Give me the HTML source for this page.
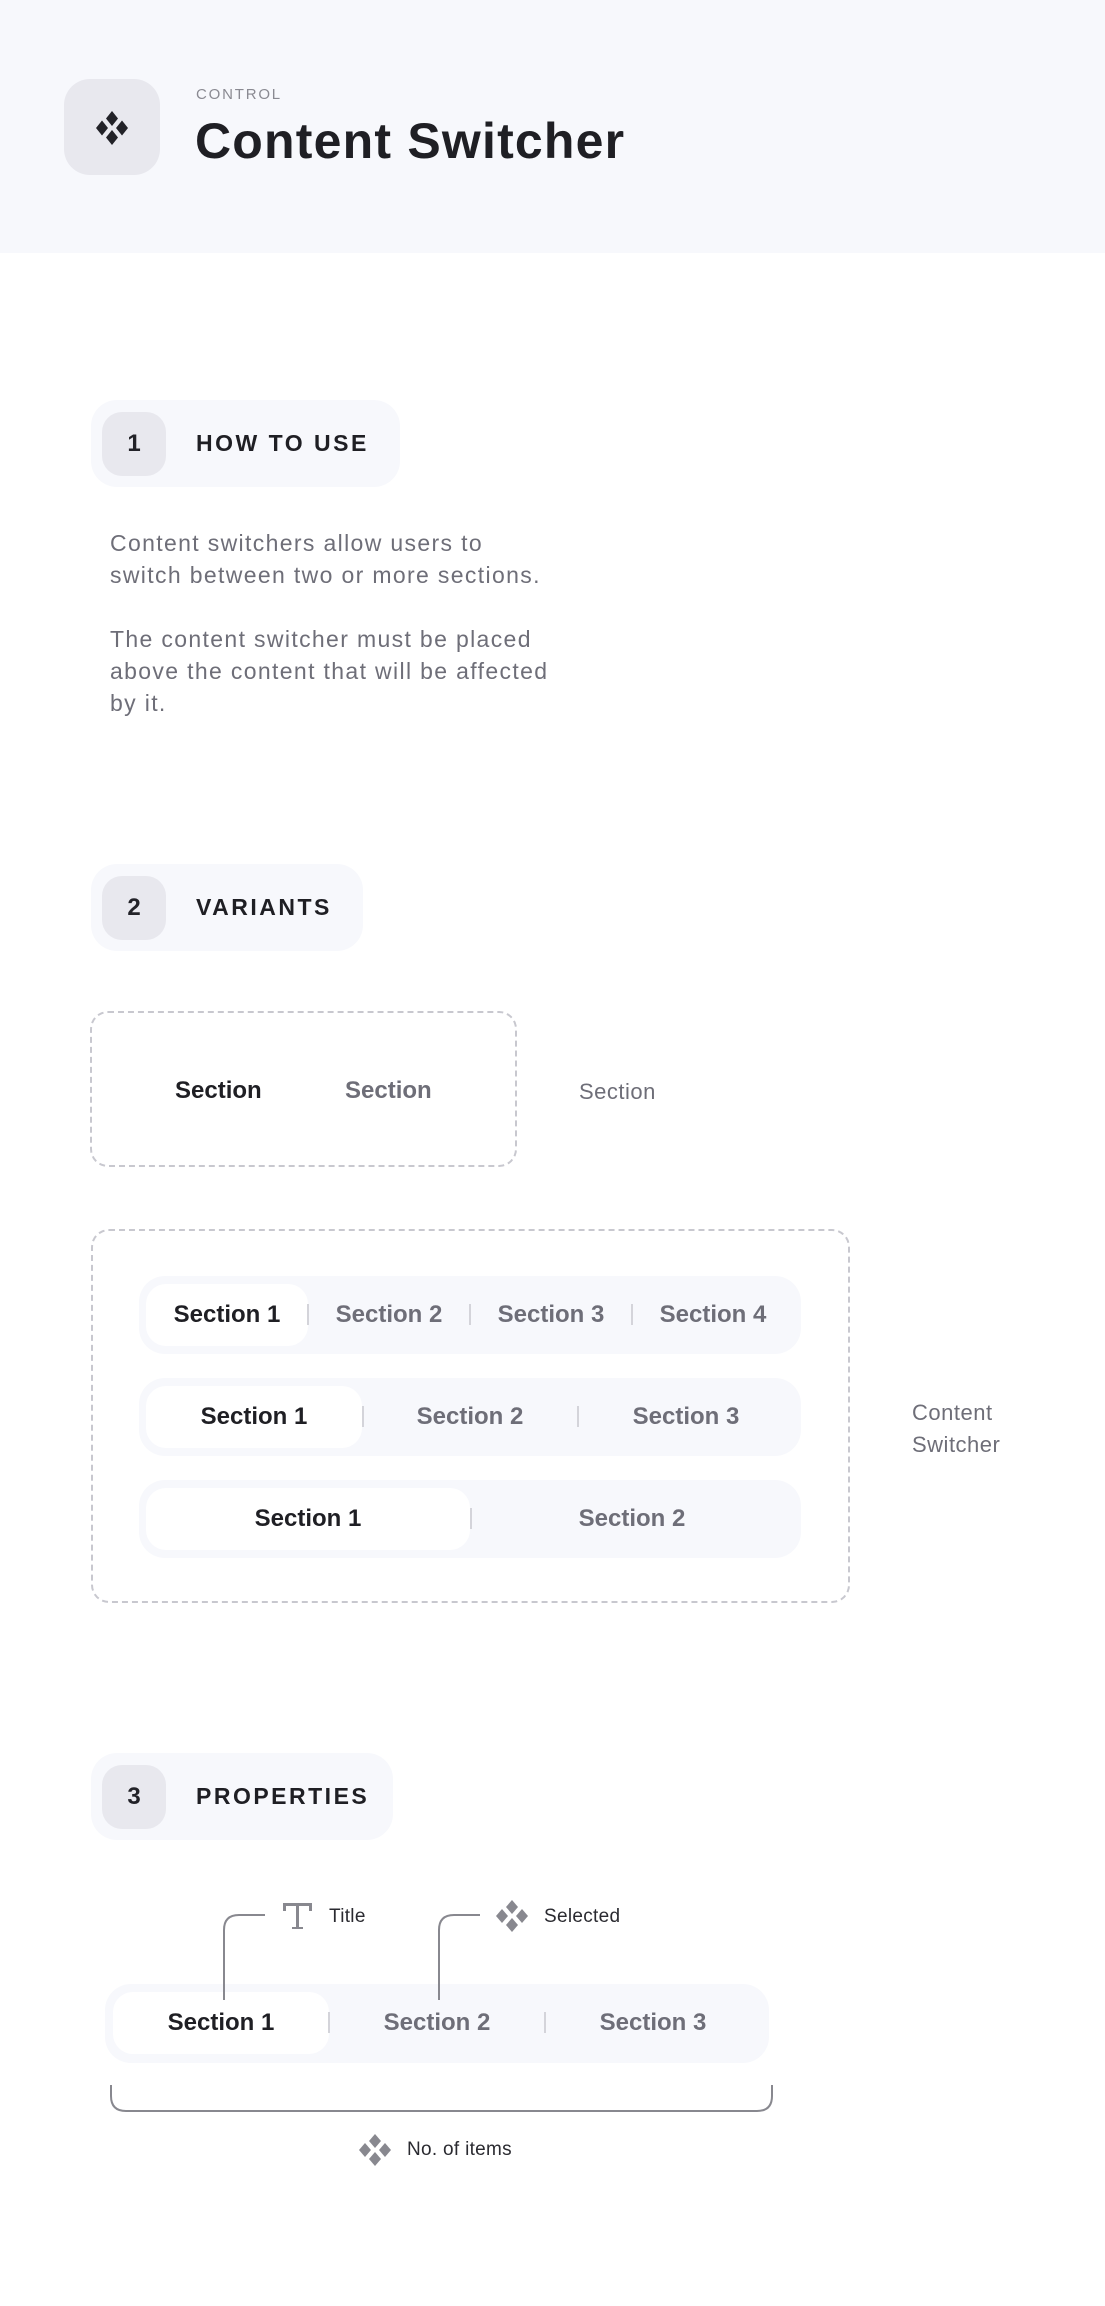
<!DOCTYPE html>
<html><head><meta charset="utf-8"><style>
*{margin:0;padding:0;box-sizing:border-box}
body{width:1105px;height:2306px;background:#fff;position:relative;font-family:"Liberation Sans",Arial,sans-serif;overflow:hidden}
.a{position:absolute}
.hdr{left:0;top:0;width:1105px;height:253px;background:#f7f8fc}
.pill{background:#f7f8fc;border-radius:26px;height:87px}
.num{position:absolute;left:11px;top:12px;width:64px;height:64px;border-radius:20px;background:#e8e8ee;font-size:24px;font-weight:bold;color:#222228;display:flex;align-items:center;justify-content:center}
.pt{position:absolute;left:105px;top:0;line-height:87px;font-size:23px;font-weight:bold;letter-spacing:2.5px;color:#1f1f24}
.p{left:110px;font-size:23px;letter-spacing:1.35px;line-height:32px;color:#6e6e78}
.dash{border:2px dashed #c8c8cf;border-radius:18px}
.sw{background:#f7f8fc;border-radius:26px;height:78px}
.it{position:absolute;top:8px;height:62px;display:flex;align-items:center;justify-content:center;font-size:24px;font-weight:bold;color:#6e6e78}
.sel{background:#fff;border-radius:20px;color:#1f1f24}
.dv{position:absolute;top:28px;width:2px;height:21px;background:#d4d4da}
.lbl{font-size:22px;color:#6e6e78;line-height:32px;letter-spacing:0.5px}
</style></head><body>
<div class="a hdr"></div>
<div class="a" style="left:64px;top:79px;width:96px;height:96px;border-radius:26px;background:#e8e8ee"></div>
<svg class="a" style="left:94px;top:110px" width="36" height="36" viewBox="0 0 36 36"><g fill="#222228"><path d="M18 1l6 7.5-6 7.5-6-7.5z"/><path d="M8 10.5l6 7.5-6 7.5-6-7.5z"/><path d="M28 10.5l6 7.5-6 7.5-6-7.5z"/><path d="M18 20l6 7.5-6 7.5-6-7.5z"/></g></svg>
<div class="a" style="left:196px;top:86px;font-size:15px;letter-spacing:1.8px;color:#8a8a92">CONTROL</div>
<div class="a" style="left:195px;top:112px;font-size:50px;font-weight:bold;color:#1f1f24;letter-spacing:1.2px">Content Switcher</div>

<div class="a pill" style="left:91px;top:400px;width:309px"><div class="num">1</div><div class="pt">HOW TO USE</div></div>
<div class="a p" style="top:527px">Content switchers allow users to<br>switch between two or more sections.<br><br>The content switcher must be placed<br>above the content that will be affected<br>by it.</div>

<div class="a pill" style="left:91px;top:864px;width:272px"><div class="num">2</div><div class="pt">VARIANTS</div></div>
<div class="a dash" style="left:90px;top:1011px;width:427px;height:156px"></div>
<div class="a" style="left:175px;top:1077px;font-size:24px;font-weight:bold;color:#1f1f24">Section</div>
<div class="a" style="left:345px;top:1077px;font-size:24px;font-weight:bold;color:#6e6e78">Section</div>
<div class="a lbl" style="left:579px;top:1076px">Section</div>

<div class="a dash" style="left:91px;top:1229px;width:759px;height:374px"></div>
<div class="a sw" style="left:139px;top:1276px;width:662px">
<div class="it sel" style="left:7px;width:162px">Section 1</div><div class="dv" style="left:168px"></div>
<div class="it" style="left:169px;width:162px">Section 2</div><div class="dv" style="left:330px"></div>
<div class="it" style="left:331px;width:162px">Section 3</div><div class="dv" style="left:492px"></div>
<div class="it" style="left:493px;width:162px">Section 4</div></div>
<div class="a sw" style="left:139px;top:1378px;width:662px">
<div class="it sel" style="left:7px;width:216px">Section 1</div><div class="dv" style="left:223px"></div>
<div class="it" style="left:223px;width:216px">Section 2</div><div class="dv" style="left:438px"></div>
<div class="it" style="left:439px;width:216px">Section 3</div></div>
<div class="a sw" style="left:139px;top:1480px;width:662px">
<div class="it sel" style="left:7px;width:324px">Section 1</div><div class="dv" style="left:331px"></div>
<div class="it" style="left:331px;width:324px">Section 2</div></div>
<div class="a lbl" style="left:912px;top:1397px">Content<br>Switcher</div>

<div class="a pill" style="left:91px;top:1753px;width:302px"><div class="num">3</div><div class="pt">PROPERTIES</div></div>

<div class="a sw" style="left:105px;top:1984px;width:664px;height:79px">
<div class="it sel" style="left:8px;width:216px">Section 1</div><div class="dv" style="left:223px"></div>
<div class="it" style="left:224px;width:216px">Section 2</div><div class="dv" style="left:439px"></div>
<div class="it" style="left:440px;width:216px">Section 3</div></div>
<svg class="a" style="left:0;top:0" width="1105" height="2306" viewBox="0 0 1105 2306">
<g fill="none" stroke="#88888f" stroke-width="2">
<path d="M224 2000V1930q0-15 15-15h26"/>
<path d="M439 2000V1930q0-15 15-15h26"/>
<path d="M111 2085v11q0 15 15 15h631q15 0 15-15v-11"/>
</g>
<g fill="#88888f">
<path d="M283 1903h29v8h-3v-5h-10v21h4v2h-11v-2h4v-21h-10v5h-3z"/>
<g transform="translate(496,1900)"><path d="M16 0l6 7-6 7-6-7z"/><path d="M6 9l6 7-6 7-6-7z"/><path d="M26 9l6 7-6 7-6-7z"/><path d="M16 18l6 7-6 7-6-7z"/></g>
<g transform="translate(359,2134)"><path d="M16 0l6 7-6 7-6-7z"/><path d="M6 9l6 7-6 7-6-7z"/><path d="M26 9l6 7-6 7-6-7z"/><path d="M16 18l6 7-6 7-6-7z"/></g>
</g></svg>
<div class="a" style="left:329px;top:1906px;font-size:19px;color:#2a2a30;letter-spacing:0.3px">Title</div>
<div class="a" style="left:544px;top:1906px;font-size:19px;color:#2a2a30;letter-spacing:0.3px">Selected</div>
<div class="a" style="left:407px;top:2139px;font-size:19px;color:#2a2a30;letter-spacing:0.3px">No. of items</div>
</body></html>
